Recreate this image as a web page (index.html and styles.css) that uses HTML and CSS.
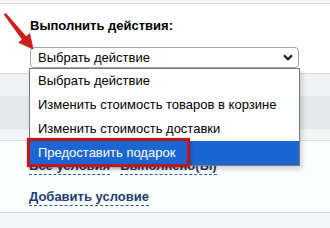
FILE: index.html
```html
<!DOCTYPE html>
<html lang="ru">
<head>
    <meta charset="UTF-8">
    <title>Выполнить действия</title>
    <link rel="stylesheet" href="styles.css">
</head>
<body>
    <div class="page">
        <div class="topStrip"></div>

        <div class="actions">
            <div class="actionsTitle">Выполнить действия:</div>
            <div class="fakeSelect">
                <span>Выбрать действие</span>
                <svg class="chevron" width="10" height="7" viewBox="0 0 10 7">
                    <path d="M1 1.2 L5 5.2 L9 1.2" fill="none" stroke="#111" stroke-width="2.2"/>
                </svg>
            </div>
        </div>

        <div class="band bandLight"></div>
        <div class="band bandDark"></div>
        <div class="band bandPale"></div>

        <div class="conditions">
            <div class="condRow">
                <a class="dashLink">Все условия</a>
                <a class="dashLink">Выполнено(Ы)</a>
            </div>
            <div class="condRow addRow">
                <a class="dashLink">Добавить условие</a>
            </div>
        </div>

        <div class="footer"></div>

        <!-- open dropdown list -->
        <ul class="dropList">
            <li>Выбрать действие</li>
            <li>Изменить стоимость товаров в корзине</li>
            <li>Изменить стоимость доставки</li>
            <li class="selected">Предоставить подарок</li>
        </ul>

        <div class="redFrame"></div>

        <svg class="arrow" width="40" height="54" viewBox="0 0 40 54">
            <polygon points="4.2,14.6 5.8,13.4 27.45,38.14 23.55,41.26" fill="#d01e1e" stroke="#c01818" stroke-width="0.8" stroke-linejoin="round"/>
            <polygon points="33,49 29.7,33.7 18.8,42.5" fill="#d01e1e" stroke="#c01818" stroke-width="0.8" stroke-linejoin="round"/>
        </svg>
    </div>
</body>
</html>
```

FILE: styles.css
```css
* {
    margin: 0;
    padding: 0;
    box-sizing: border-box;
}

body {
    width: 330px;
    height: 228px;
    overflow: hidden;
    font-family: "Liberation Sans", Arial, sans-serif;
    font-size: 13px;
    color: #000;
    background: #f3f5f6;
}

.page {
    position: relative;
    width: 330px;
    height: 228px;
    display: flex;
    flex-direction: column;
}

.topStrip {
    height: 4px;
    background: #f3f5f6;
    border-bottom: 1px solid #d9dddf;
}

.actions {
    height: 70px;
    background: #fff;
    border-bottom: 1px solid #d5d9dc;
    padding: 14px 0 0 30px;
}

.actionsTitle {
    font-weight: bold;
    font-size: 13px;
    line-height: 16px;
}

.fakeSelect {
    margin-top: 13px;
    width: 269px;
    height: 21px;
    border: 1px solid #a6a6a6;
    border-radius: 4px;
    background: #fff;
    display: flex;
    align-items: center;
    justify-content: space-between;
    padding: 0 5px 1px 7px;
    font-size: 13px;
}

.chevron {
    margin-top: 1px;
}

.band {
    width: 100%;
}

.bandLight {
    height: 22px;
    background: #f0f2f4;
}

.bandDark {
    height: 33px;
    background: #e4e8ea;
}

.bandPale {
    height: 12px;
    background: #f2f4f6;
    border-bottom: 1px solid #d8dcdf;
}

.conditions {
    height: 72px;
    background: #fcfdfd;
    border-bottom: 1px solid #d5d9dc;
    padding: 17px 0 0 29px;
}

.condRow {
    display: flex;
    gap: 10px;
    line-height: 15px;
}

.addRow {
    margin-top: 14px;
}

.dashLink {
    font-weight: bold;
    color: #1e3f72;
    border-bottom: 1px dashed #2a5ba8;
    padding-bottom: 1px;
}

.footer {
    flex: 1;
    background: #f3f5f6;
}

.dropList {
    position: absolute;
    left: 29px;
    top: 68px;
    width: 271px;
    list-style: none;
    background: #fff;
    border: 1px solid #7a7a7a;
    box-shadow: 2px 3px 5px rgba(0, 0, 0, 0.18);
    font-size: 13px;
}

.dropList li {
    height: 24px;
    line-height: 24px;
    padding-left: 8px;
    white-space: nowrap;
}

.dropList .selected {
    background: #1b66d2;
    color: #fff;
}

.redFrame {
    position: absolute;
    left: 27px;
    top: 138px;
    width: 163px;
    height: 29px;
    border: 3px solid #bf1717;
    box-shadow: 0 0 1px rgba(120, 0, 0, 0.6), 1px 2px 3px rgba(0, 0, 0, 0.2);
}

.arrow {
    position: absolute;
    left: 0;
    top: 0;
}
```
